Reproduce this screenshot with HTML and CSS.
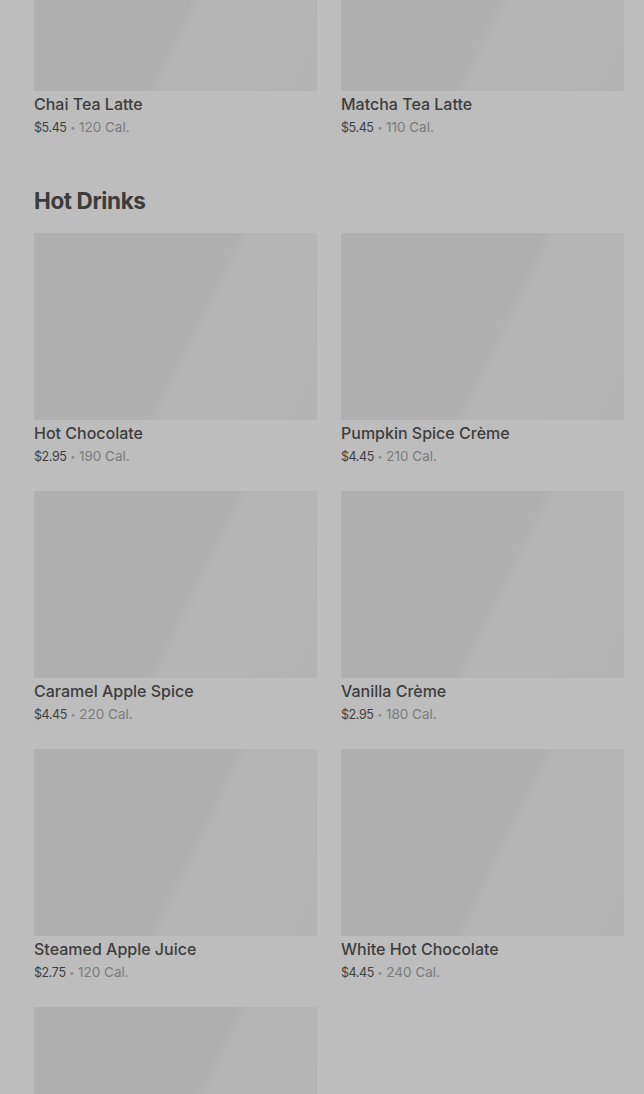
FILE: index.html
```html
<!DOCTYPE html>
<html lang="en">
<head>
    <meta charset="UTF-8">
    <meta name="viewport" content="width=device-width, initial-scale=1.0">
    <title>Menu</title>
    <link rel="stylesheet" href="styles.css">
</head>
<body>

    <main class="menu">

        <!-- Tea Lattes (scrolled past) -->
        <section class="grid">
            <div class="item">
                <div class="thumb"></div>
                <div class="name">Chai Tea Latte</div>
                <div class="meta"><span class="price">$5.45</span> <span class="dot">•</span> <span class="cal">120 Cal.</span></div>
            </div>
            <div class="item">
                <div class="thumb"></div>
                <div class="name">Matcha Tea Latte</div>
                <div class="meta"><span class="price">$5.45</span> <span class="dot">•</span> <span class="cal">110 Cal.</span></div>
            </div>
        </section>

        <!-- Hot Drinks -->
        <h2 class="heading">Hot Drinks</h2>
        <section class="grid">
            <div class="item">
                <div class="thumb"></div>
                <div class="name">Hot Chocolate</div>
                <div class="meta"><span class="price">$2.95</span> <span class="dot">•</span> <span class="cal">190 Cal.</span></div>
            </div>
            <div class="item">
                <div class="thumb"></div>
                <div class="name">Pumpkin Spice Crème</div>
                <div class="meta"><span class="price">$4.45</span> <span class="dot">•</span> <span class="cal">210 Cal.</span></div>
            </div>
            <div class="item">
                <div class="thumb"></div>
                <div class="name">Caramel Apple Spice</div>
                <div class="meta"><span class="price">$4.45</span> <span class="dot">•</span> <span class="cal">220 Cal.</span></div>
            </div>
            <div class="item">
                <div class="thumb"></div>
                <div class="name">Vanilla Crème</div>
                <div class="meta"><span class="price">$2.95</span> <span class="dot">•</span> <span class="cal">180 Cal.</span></div>
            </div>
            <div class="item">
                <div class="thumb"></div>
                <div class="name">Steamed Apple Juice</div>
                <div class="meta"><span class="price">$2.75</span> <span class="dot">•</span> <span class="cal">120 Cal.</span></div>
            </div>
            <div class="item">
                <div class="thumb"></div>
                <div class="name">White Hot Chocolate</div>
                <div class="meta"><span class="price">$4.45</span> <span class="dot">•</span> <span class="cal">240 Cal.</span></div>
            </div>
            <div class="item">
                <div class="thumb"></div>
            </div>
        </section>

    </main>

</body>
</html>
```

FILE: styles.css
```css
body { margin: 0; background: #bdbdbd; font-family: Inter, "Noto Sans", sans-serif; overflow: hidden; height: 1094px; }
.menu { padding: 0 20px 0 34px; margin-top: -96px; }
.grid { display: grid; grid-template-columns: 283px 283px; column-gap: 24px; row-gap: 25px; }
.thumb { height: 187px; background: linear-gradient(116deg, #b0b0b0 0%, #b0b0b0 54%, #b5b5b5 58%, #b5b5b5 76%, #b3b3b3 100%); }
.name { margin-top: 3px; height: 20px; line-height: 20px; font-size: 16px; font-weight: 500; color: #3d3d3d; white-space: nowrap; }
.meta { margin-top: 3px; height: 20px; line-height: 20px; font-size: 13px; color: #3f3f3f; white-space: nowrap; }
.price { font-size: 12.5px; letter-spacing: -0.4px; }
.dot { color: #8a8a8a; font-size: 9px; line-height: 0; vertical-align: 1px; }
.cal { color: #7b7b7b; font-size: 13.5px; }
.heading { margin: 50px 0 18px; line-height: 28px; font-size: 22.5px; font-weight: 700; color: #3b3b3b; letter-spacing: -0.4px; }
```
